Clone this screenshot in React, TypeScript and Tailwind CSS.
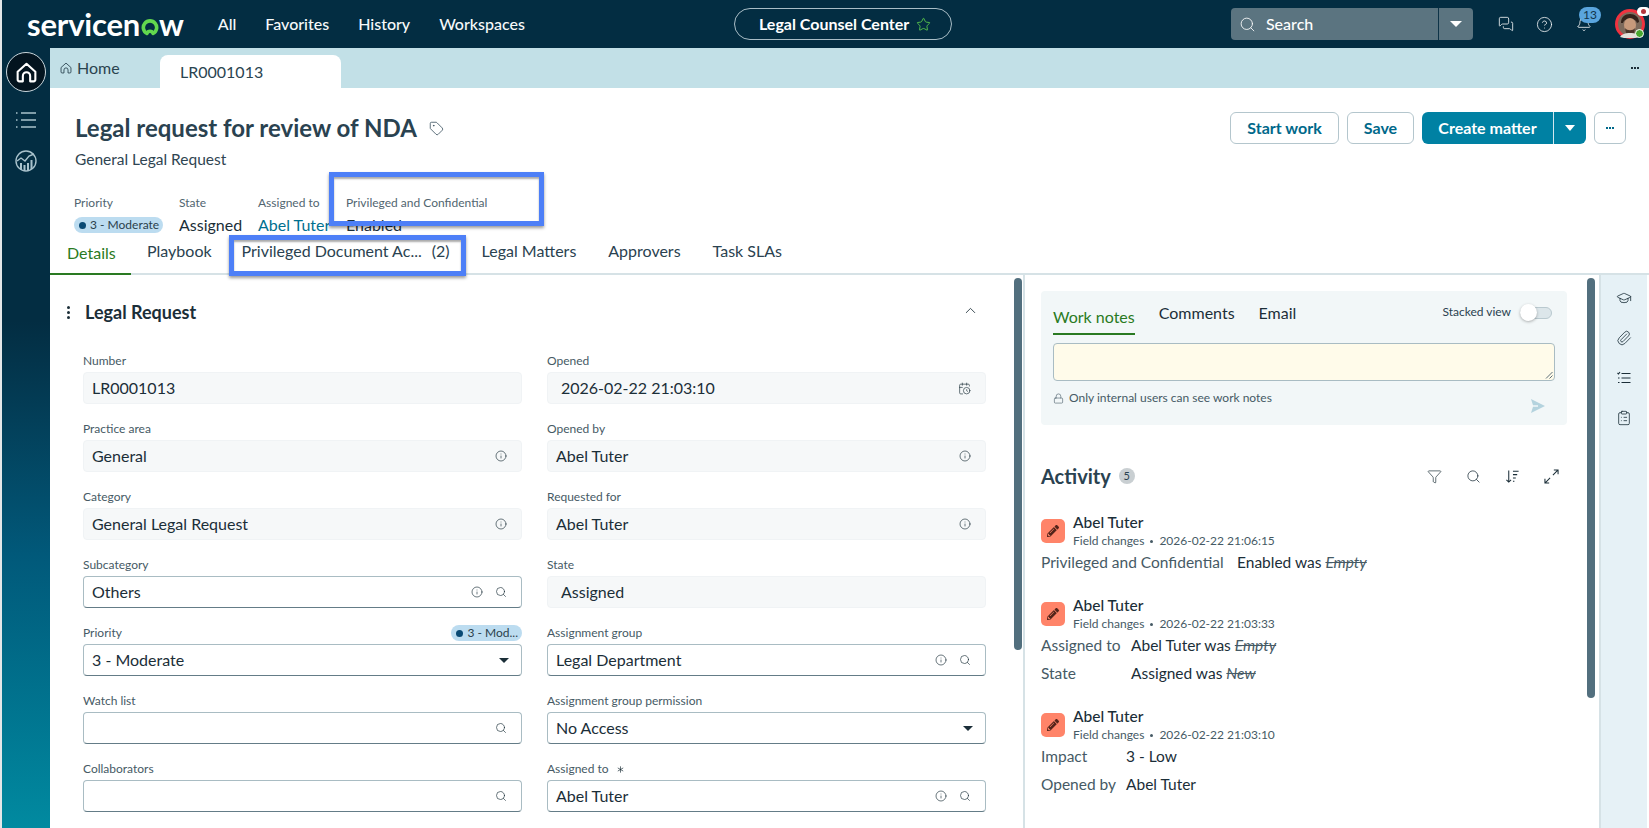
import { Asterisk, CalendarClock, ChevronUp, ClipboardList, Funnel, GraduationCap, Info, Lock, MessagesSquare, Paperclip, Search, Star, Tag, Bell, CircleHelp } from 'lucide-react'
import { FaPencilAlt } from 'react-icons/fa'

const INK = 'text-[#1b2e38]'

function HomeIcon({ className }: { className: string }) {
  return (
    <svg viewBox="0 0 24 24" fill="none" stroke="currentColor" strokeLinejoin="round" className={className}>
      <path d="M3.5 11.2 12 3.6l8.5 7.6v7.6a1.7 1.7 0 0 1-1.7 1.7h-3.3v-5.2a3.5 3.5 0 0 0-7 0v5.2H5.2a1.7 1.7 0 0 1-1.7-1.7z" />
    </svg>
  )
}

function Logo() {
  return (
    <div className="flex items-center text-[31px] leading-none font-bold text-white tracking-[-0.2px] h-[30px]">
      <span>servicen</span>
      <svg viewBox="0 0 20 20" className="w-[18px] h-[18px] mt-[5px] mx-[0.5px]">
        <path d="M6.6 17.2A7.4 7.4 0 1 1 13.4 17.2 3.6 3.6 0 0 0 6.6 17.2Z" fill="none" stroke="#62d84e" strokeWidth="4" strokeLinejoin="round" />
      </svg>
      <span>w</span>
    </div>
  )
}

function Avatar() {
  return (
    <div className="relative w-[30px] h-[30px]">
      <svg viewBox="0 0 30 30" className="w-[30px] h-[30px]">
        <circle cx="15" cy="15" r="13.5" fill="#7d6a5c" stroke="#f0323f" strokeWidth="3" />
        <path d="M6 14c0-6 4-9 9-9s9 3 9 8l-2 1c-1-3-3-4-7-4s-6 1-7 4z" fill="#33231b" />
        <ellipse cx="15" cy="16" rx="6" ry="7" fill="#c79a7c" />
        <path d="M10 19c2 3 8 3 10 0l-1 5c-2 2-6 2-8 0z" fill="#4a3429" />
        <path d="M5 28c2-3 5-4 10-4s8 1 10 4l-5 1H9z" fill="#e3e0da" />
      </svg>
      <span className="absolute right-[-5px] top-[-2px] w-[13px] h-[9px] rounded-full bg-white flex items-center justify-center">
        <span className="w-[5px] h-[5px] rounded-full bg-[#b3343d]" />
      </span>
      <span className="absolute right-[1px] bottom-[1px] w-[9px] h-[9px] rounded-full bg-[#48a72f] border border-white" />
    </div>
  )
}

function TopBar() {
  return (
    <header className="h-12 bg-[#032d42] flex items-center text-white shrink-0">
      <div className="w-[25px]" />
      <Logo />
      <nav className="flex items-center gap-[29px] text-[16px] font-medium ml-[34px] text-[#f6f9fa]">
        <span>All</span>
        <span>Favorites</span>
        <span>History</span>
        <span>Workspaces</span>
      </nav>
      <div className="ml-[209px] w-[218px] h-8 rounded-full border border-[#a9bdc6] flex items-center pl-6 gap-[7px] text-[16px] font-bold">
        <span>Legal Counsel Center</span>
        <Star size={15} strokeWidth={1.3} className="text-[#62d84e]" />
      </div>
      <div className="ml-[279px] w-[242px] h-8 rounded-[4px] bg-[#5b7480] flex items-center">
        <Search size={17} strokeWidth={1.2} className="ml-[8px]" />
        <span className="ml-[10px] text-[16px] font-medium flex-1">Search</span>
        <span className="w-[35px] h-8 border-l border-[#0d3347] flex items-center justify-center">
          <span className="w-0 h-0 border-x-[6px] border-x-transparent border-t-[6px] border-t-white" />
        </span>
      </div>
      <MessagesSquare size={16} strokeWidth={1.2} className="ml-[25px]" />
      <CircleHelp size={17} strokeWidth={1.1} className="ml-[22px]" />
      <div className="relative ml-[23px]">
        <Bell size={16} strokeWidth={1.2} />
        <span className="absolute left-[3px] top-[-9px] w-[22px] h-4 rounded-full bg-[#5aa5de] text-[#12344a] text-[12px] leading-4 text-center">13</span>
      </div>
      <div className="ml-[23px]">
        <Avatar />
      </div>
    </header>
  )
}

function SideBar() {
  return (
    <aside className="w-12 shrink-0 flex flex-col items-center pt-1 bg-gradient-to-b from-[#032d42] from-35% via-[#01597a] via-65% to-[#018aa0] text-[#a9c2cc]">
      <div className="w-10 h-10 rounded-full bg-[#03141f] border border-[#c9d6dc] flex items-center justify-center text-white">
        <HomeIcon className="w-[25px] h-[25px] stroke-[2]" />
      </div>
      <svg viewBox="0 0 22 18" fill="none" stroke="currentColor" strokeWidth="1.4" className="w-[22px] h-[18px] mt-[19px]">
        <path d="M6 2h15M6 9h15M6 16h15M1 2h1.5M1 9h1.5M1 16h1.5" />
      </svg>
      <svg viewBox="0 0 22 22" fill="none" stroke="currentColor" strokeWidth="1.4" className="w-[22px] h-[22px] mt-[21px]">
        <circle cx="11" cy="11" r="10" />
        <path d="M2 11l4-3 4 3 4-5 5-2" />
        <path d="M6 20v-7M9.5 21v-6M13 21v-8M16.5 19v-9" strokeWidth="2" />
      </svg>
    </aside>
  )
}

function TabStrip() {
  return (
    <div className="h-10 shrink-0 bg-[#c2e0e7] flex items-end text-[16px] text-[#2a4450] relative">
      <div className="w-[110px] h-10 flex items-center pl-[9px] gap-1">
        <HomeIcon className="w-[14px] h-[14px] stroke-[1.5]" />
        <span>Home</span>
      </div>
      <div className="w-[181px] h-[33px] bg-white rounded-t-lg pl-5 flex items-center">LR0001013</div>
      <div className="ml-auto mr-[10px] h-10 flex items-center gap-[1px]">
        <span className="w-[2px] h-[2px] bg-[#1b2e38]" />
        <span className="w-[2px] h-[2px] bg-[#1b2e38]" />
        <span className="w-[2px] h-[2px] bg-[#1b2e38]" />
      </div>
    </div>
  )
}

function Meta({ label, width, children }: { label: string; width: string; children: React.ReactNode }) {
  return (
    <div className={`${width} shrink-0 whitespace-nowrap`}>
      <div className="text-[12px] leading-4 text-[#516570]">{label}</div>
      <div className="mt-[4px] h-[20px] flex items-center text-[16px]">{children}</div>
    </div>
  )
}

function RecordHeader() {
  return (
    <div className="h-[187px] shrink-0 border-b-2 border-[#d6e2e6] flex flex-col">
      <div className="flex h-[117px] pr-[23px]">
        <div className="pl-[25px] pt-[24px] flex-1">
          <div className="flex items-center h-8">
            <h1 className="text-[24px] font-bold text-[#2a4250]">Legal request for review of NDA</h1>
            <Tag size={15} strokeWidth={1.2} className="ml-[12px] text-[#2a4250]" />
          </div>
          <div className="text-[15.5px] leading-5 text-[#2f4552] mt-[5px]">General Legal Request</div>
        </div>
        <div className="flex pt-6 text-[16px] font-bold">
          <button className="w-[109px] h-8 rounded-md border border-[#b4c6cd] text-[#00688a]">Start work</button>
          <button className="ml-2 w-[67px] h-8 rounded-md border border-[#b4c6cd] text-[#00688a]">Save</button>
          <div className="ml-2 w-[164px] h-8 rounded-md bg-[#0081a3] text-white flex items-center">
            <span className="w-[131px] text-center">Create matter</span>
            <span className="flex-1 h-8 border-l border-[#d3e7ee] flex items-center justify-center">
              <span className="w-0 h-0 border-x-[5px] border-x-transparent border-t-[6px] border-t-white" />
            </span>
          </div>
          <div className="ml-2 w-8 h-8 rounded-md border border-[#b4c6cd] flex items-center justify-center gap-[1px]">
            <span className="w-[2px] h-[2px] bg-[#00688a]" />
            <span className="w-[2px] h-[2px] bg-[#00688a]" />
            <span className="w-[2px] h-[2px] bg-[#00688a]" />
          </div>
        </div>
      </div>
      <div className="flex pl-[24px] -mt-[10px] h-[44px]">
        <Meta label="Priority" width="w-[105px]">
          <Pill text="3 - Moderate" />
        </Meta>
        <Meta label="State" width="w-[79px]">
          <span className={INK}>Assigned</span>
        </Meta>
        <Meta label="Assigned to" width="w-[88px]">
          <span className="text-[#00708f]">Abel Tuter</span>
        </Meta>
        <Meta label="Privileged and Confidential" width="w-[190px]">
          <span className={INK}>Enabled</span>
        </Meta>
      </div>
      <div className="flex items-end mt-auto text-[16px] text-[#2a4250] whitespace-nowrap">
        <div className="w-[81px] h-[34px] border-b-2 border-[#2a7a22] -mb-[2px] pl-[17px] text-[#2a7a22] leading-[24px]">Details</div>
        <div className="h-[34px] ml-4 leading-[24px]">Playbook</div>
        <div className="h-[34px] ml-[30px] w-[208px] leading-[24px] flex justify-between">
          <span>Privileged Document Ac...</span>
          <span>(2)</span>
        </div>
        <div className="h-[34px] ml-[32px] leading-[24px]">Legal Matters</div>
        <div className="h-[34px] ml-[32px] leading-[24px]">Approvers</div>
        <div className="h-[34px] ml-[32px] leading-[24px]">Task SLAs</div>
      </div>
    </div>
  )
}

function Pill({ text }: { text: string }) {
  return (
    <span className="h-4 rounded-full bg-[#bcdcf0] flex items-center pl-[5px] pr-[4px] gap-[4px] text-[12px] text-[#2a3f4b]">
      <span className="w-[7px] h-[7px] rounded-full bg-[#0a4a74]" />
      {text}
    </span>
  )
}

interface FieldProps {
  label: string
  value?: string
  readOnly?: boolean
  inset?: boolean
  info?: boolean
  search?: boolean
  select?: boolean
  calendar?: boolean
  required?: boolean
  pill?: boolean
}

function Field({ label, value, readOnly, inset, info, search, select, calendar, required, pill }: FieldProps) {
  const box = readOnly
    ? 'bg-[#f6f8f9] border-[#f0f3f5]'
    : 'bg-white border-[#a9bcc3] border-b-[#647c87]'
  return (
    <div className="h-[54px]">
      <div className="h-[22px] flex items-center justify-between text-[12px] text-[#465a65]">
        <span className="flex items-center gap-[6px]">
          {label}
          {required && <Asterisk size={11} strokeWidth={1.5} className={INK} />}
        </span>
        {pill && <Pill text="3 - Mod..." />}
      </div>
      <div className={`h-8 rounded-[4px] border flex items-center text-[16px] ${INK} ${box} ${inset ? 'pl-[13px]' : 'pl-2'}`}>
        <span className="flex-1">{value}</span>
        <span className="flex items-center gap-[12px] pr-[14px]">
          {info && <Info size={12} strokeWidth={1.3} />}
          {search && <Search size={12} strokeWidth={1.3} />}
          {calendar && <CalendarClock size={13} strokeWidth={1.2} />}
          {select && (
            <span className="w-0 h-0 mr-[-2px] border-x-[5px] border-x-transparent border-t-[5px] border-t-[#1b2e38]" />
          )}
        </span>
      </div>
    </div>
  )
}

function LegalForm() {
  return (
    <div className="flex-1 pl-[17px] pr-[28px]">
      <div className="h-[75px] flex items-center">
        <span className="flex flex-col gap-[2px] w-[18px] pl-0">
          <span className="w-[3px] h-[3px] rounded-full bg-[#1b2e38]" />
          <span className="w-[3px] h-[3px] rounded-full bg-[#1b2e38]" />
          <span className="w-[3px] h-[3px] rounded-full bg-[#1b2e38]" />
        </span>
        <h2 className={`text-[18px] font-bold ${INK}`}>Legal Request</h2>
        <ChevronUp size={17} strokeWidth={1.2} className={`ml-auto mr-[7px] -mt-1 ${INK}`} />
      </div>
      <div className="grid grid-cols-[439px_439px] gap-x-[25px] gap-y-[14px] pl-[16px]">
        <Field label="Number" value="LR0001013" readOnly />
        <Field label="Opened" value="2026-02-22 21:03:10" readOnly inset calendar />
        <Field label="Practice area" value="General" readOnly info />
        <Field label="Opened by" value="Abel Tuter" readOnly info />
        <Field label="Category" value="General Legal Request" readOnly info />
        <Field label="Requested for" value="Abel Tuter" readOnly info />
        <Field label="Subcategory" value="Others" info search />
        <Field label="State" value="Assigned" readOnly inset />
        <Field label="Priority" value="3 - Moderate" select pill />
        <Field label="Assignment group" value="Legal Department" info search />
        <Field label="Watch list" search />
        <Field label="Assignment group permission" value="No Access" select />
        <Field label="Collaborators" search />
        <Field label="Assigned to" value="Abel Tuter" info search required />
      </div>
    </div>
  )
}

function WorkNotes() {
  return (
    <div className="h-[134px] rounded-[4px] bg-[#f2f7f8] px-3 relative">
      <div className="flex items-center h-[44px] text-[16px]">
        <div className="h-[44px] pt-[16px] border-b-2 border-[#2a7a22] text-[#2a7a22] leading-5">Work notes</div>
        <span className={`ml-[24px] mt-[-1px] ${INK} leading-5`}>Comments</span>
        <span className={`ml-[24px] mt-[-1px] ${INK} leading-5`}>Email</span>
        <span className="ml-auto text-[12px] text-[#2a4250] mt-[-2px]">Stacked view</span>
        <span className="relative ml-[9px] mr-[3px] w-[32px] h-[12px] rounded-full bg-[#dce6ea] border border-[#b9c9cf]">
          <span className="absolute left-[-1px] top-[-4px] w-[17px] h-[17px] rounded-full bg-white shadow-[0_1px_3px_#0000004d]" />
        </span>
      </div>
      <div className="relative mt-2 h-[38px] rounded-[4px] border border-[#a9bcc3] bg-[#fffbea]">
        <svg viewBox="0 0 8 8" className="absolute right-[1px] bottom-[1px] w-2 h-2" stroke="#5d6f78" fill="none">
          <path d="M1 7.5 7.5 1M4.5 7.5l3-3" />
        </svg>
      </div>
      <div className="flex items-center mt-[8px] gap-[5px] text-[12px] text-[#465a65]">
        <Lock size={11} strokeWidth={1.3} />
        <span>Only internal users can see work notes</span>
      </div>
      <svg viewBox="0 0 14 14" className="absolute right-[22px] bottom-[12px] w-[14px] h-[14px]" fill="#b4d3de">
        <path d="M0 0 14 7 0 14 2 7.8h5V6.2H2z" />
      </svg>
    </div>
  )
}

function ActivityEntry({ when, children }: { when: string; children: React.ReactNode }) {
  return (
    <div>
      <div className="flex h-6 items-center">
        <span className="w-6 h-6 rounded-[5px] bg-[#ff8469] flex items-center justify-center text-[#54241a]">
          <FaPencilAlt size={12} />
        </span>
        <div className="ml-2 flex flex-col">
          <span className={`text-[15.5px] leading-[18px] font-medium ${INK}`}>Abel Tuter</span>
          <span className="text-[12px] leading-[16px] text-[#465a65] flex items-center gap-[6px] mt-[2px] whitespace-nowrap">
            Field changes
            <span className="w-[3px] h-[3px] rounded-full bg-[#465a65]" />
            {when}
          </span>
        </div>
      </div>
      <div className="mt-[10px] flex flex-col gap-2">{children}</div>
    </div>
  )
}

function Change({ label, labelWidth, value, was }: { label: string; labelWidth: string; value: string; was?: string }) {
  return (
    <div className="flex h-5 items-center text-[15.5px] whitespace-nowrap">
      <span className={`${labelWidth} shrink-0 text-[#465a65]`}>{label}</span>
      <span className={INK}>
        {value}
        {was && (
          <>
            {' was '}
            <span className="italic line-through text-[#465a65]">{was}</span>
          </>
        )}
      </span>
    </div>
  )
}

function Activity() {
  return (
    <div>
      <div className="mt-[39px] h-6 flex items-center">
        <h2 className="text-[20px] font-bold text-[#2a4250]">Activity</h2>
        <span className="ml-2 w-4 h-4 rounded-full bg-[#c9cfd2] text-[11px] text-center leading-4 text-[#2a4250]">5</span>
        <div className={`ml-auto flex items-center gap-[24px] pr-[8px] ${INK}`}>
          <Funnel size={15} strokeWidth={1.1} />
          <Search size={15} strokeWidth={1.2} />
          <svg viewBox="0 0 16 16" className="w-[15px] h-[15px]" fill="none" stroke="currentColor" strokeWidth="1.1">
            <path d="M4 1.5v12.5M1.5 11.5 4 14l2.5-2.5M8.5 2.5h6M8.5 6h4.5M8.5 9.5h3M8.5 13h1.5" />
          </svg>
          <svg viewBox="0 0 16 16" className="w-[15px] h-[15px]" fill="none" stroke="currentColor" strokeWidth="1.1">
            <path d="M9.5 6.5 15 1M10.5 1H15v4.5M6.5 9.5 1 15M5.5 15H1v-4.5" />
          </svg>
        </div>
      </div>
      <div className="mt-[31px] flex flex-col gap-[29px]">
        <ActivityEntry when="2026-02-22 21:06:15">
          <Change label="Privileged and Confidential" labelWidth="w-[196px]" value="Enabled" was="Empty" />
        </ActivityEntry>
        <ActivityEntry when="2026-02-22 21:03:33">
          <Change label="Assigned to" labelWidth="w-[90px]" value="Abel Tuter" was="Empty" />
          <Change label="State" labelWidth="w-[90px]" value="Assigned" was="New" />
        </ActivityEntry>
        <ActivityEntry when="2026-02-22 21:03:10">
          <Change label="Impact" labelWidth="w-[85px]" value="3 - Low" />
          <Change label="Opened by" labelWidth="w-[85px]" value="Abel Tuter" />
        </ActivityEntry>
      </div>
    </div>
  )
}

function ScrollThumb({ height }: { height: string }) {
  return <div className={`w-2 ${height} mt-[3px] rounded-full bg-[#526f7e] shrink-0`} />
}

function RightRail() {
  return (
    <aside className="w-[48px] shrink-0 bg-[#e6f1f6] border-l-2 border-[#d6e2e6] flex flex-col items-center pt-[15px] gap-[24px] text-[#1b2e38]">
      <GraduationCap size={16} strokeWidth={1.2} />
      <Paperclip size={16} strokeWidth={1.2} />
      <svg viewBox="0 0 16 16" className="w-4 h-4" fill="none" stroke="currentColor" strokeWidth="1.1">
        <path d="M5.5 3.5h9M5.5 8h9M5.5 12.5h9M1.5 3l1 1 1.5-2M2 8h1.5M2 12.5h1.5" />
      </svg>
      <ClipboardList size={16} strokeWidth={1.2} />
    </aside>
  )
}

export default function App() {
  return (
    <div className="w-[1649px] h-[828px] overflow-hidden flex bg-white font-['Lato','Liberation_Sans',sans-serif]">
      <div className="w-[2px] shrink-0 bg-[#e4e7e8]" />
      <div className="flex-1 flex flex-col min-w-0">
        <TopBar />
        <div className="flex-1 flex min-h-0">
          <SideBar />
          <main className="flex-1 flex flex-col min-w-0 relative">
            <TabStrip />
            <RecordHeader />
            <div className="flex-1 flex min-h-0 overflow-hidden">
              <div className="w-[975px] shrink-0 flex border-r-2 border-[#d6e2e6] pr-[3px]">
                <LegalForm />
                <ScrollThumb height="h-[372px]" />
              </div>
              <div className="w-[574px] shrink-0 flex pl-4 pr-1">
                <div className="w-[526px] shrink-0 pt-[16px]">
                  <WorkNotes />
                  <Activity />
                </div>
                <div className="ml-5">
                  <ScrollThumb height="h-[420px]" />
                </div>
              </div>
              <RightRail />
            </div>
            {/* annotation boxes drawn on top of the record header */}
            <div className="absolute left-[279px] top-[124px] w-[215px] h-[54px] border-[5px] border-[#4d7ff7] shadow-[0_2px_3px_#00000066,inset_0_2px_2px_#00000055]" />
            <div className="absolute left-[179px] top-[187px] w-[237px] h-[41px] border-[5px] border-[#4d7ff7] shadow-[0_2px_3px_#00000066,inset_0_2px_2px_#00000055]" />
          </main>
        </div>
      </div>
    </div>
  )
}
